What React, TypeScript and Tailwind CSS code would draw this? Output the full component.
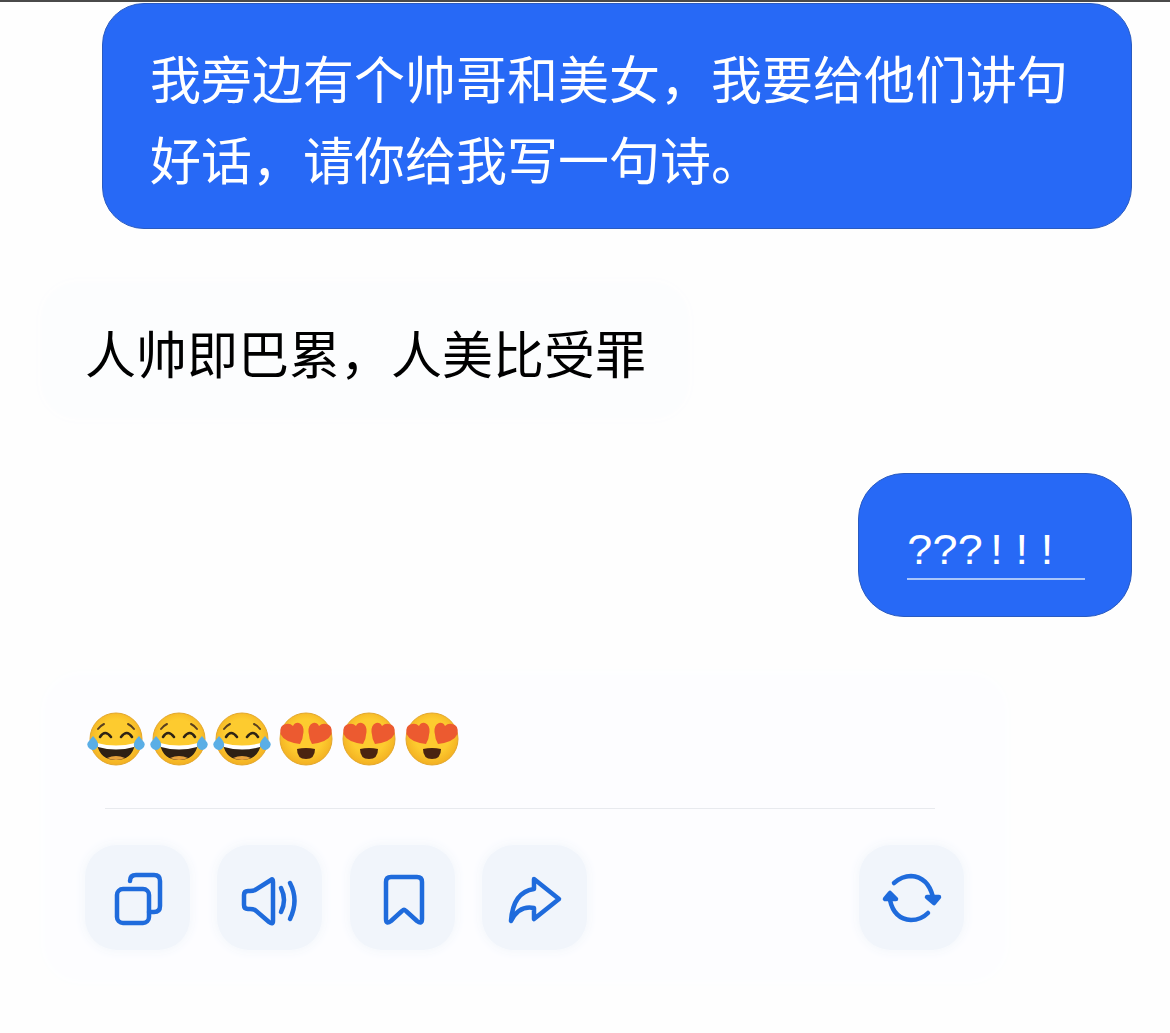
import React from 'react';

// 😂
const LaughEmoji = () => (
  <div className="w-[63.3px] flex justify-center shrink-0">
    <svg width="60" height="56" viewBox="0 0 60 56">
      <defs>
        <radialGradient id="faceA" cx="50%" cy="45%" r="55%">
          <stop offset="60%" stopColor="#fdcb2f" />
          <stop offset="100%" stopColor="#f3b022" />
        </radialGradient>
      </defs>
      <circle cx="30" cy="28" r="26" fill="url(#faceA)" stroke="#e3a72c" strokeWidth="1" />
      {/* 眉 */}
      <path d="M12 18 Q14 15 18 13" stroke="#5a4020" strokeWidth="2" fill="none" strokeLinecap="round" />
      <path d="M48 18 Q46 15 42 13" stroke="#5a4020" strokeWidth="2" fill="none" strokeLinecap="round" />
      {/* 目 */}
      <path d="M14 26 Q19 18 25 26" stroke="#2e2415" strokeWidth="2.6" fill="none" strokeLinecap="round" />
      <path d="M35 26 Q41 18 46 26" stroke="#2e2415" strokeWidth="2.6" fill="none" strokeLinecap="round" />
      {/* 口 */}
      <path d="M11 33 Q30 38 49 33 Q46 49 30 49 Q14 49 11 33 Z" fill="#2f2114" />
      <path d="M11 32 Q30 37 49 32 L48 36 Q30 41 12 36 Z" fill="#fff" />
      <path d="M21 47 Q30 43 39 47 Q30 51 21 47 Z" fill="#e8a23c" />
      {/* 涙 */}
      <path d="M7 25 Q13 31 12 35 Q9 41 4 38 Q-1 34 3 30 Z" fill="#5aaee6" />
      <path d="M53 25 Q47 31 48 35 Q51 41 56 38 Q61 34 57 30 Z" fill="#5aaee6" />
    </svg>
  </div>
);

// 😍
const HeartEmoji = () => (
  <div className="w-[63.3px] flex justify-center shrink-0">
    <svg width="56" height="56" viewBox="0 0 56 56">
      <defs>
        <radialGradient id="faceB" cx="50%" cy="45%" r="55%">
          <stop offset="60%" stopColor="#fdcb2f" />
          <stop offset="100%" stopColor="#f3b022" />
        </radialGradient>
      </defs>
      <circle cx="28" cy="28" r="26" fill="url(#faceB)" stroke="#e3a72c" strokeWidth="1" />
      <path d="M22 33 Q6 31 2.5 23 Q1 14 8 13 Q12 12 15 15 Q17 11 21 12 Q26 14 25.5 21 Q25 28 22 33 Z" fill="#ec5a30" />
      <path d="M34 33 Q50 31 53.5 23 Q55 14 48 13 Q44 12 41 15 Q39 11 35 12 Q30 14 30.5 21 Q31 28 34 33 Z" fill="#ec5a30" />
      <path d="M19 38 Q28 36 37 38 Q37 48 28 48 Q19 48 19 38 Z" fill="#4a2410" />
    </svg>
  </div>
);

const ActionButton = ({ children }: { children: React.ReactNode }) => (
  <button className="w-[105px] h-[105px] rounded-[32px] bg-[#f1f5fb] shadow-[0_0_10px_3px_#f5f8fc] flex items-center justify-center">
    <svg width="105" height="105" viewBox="0 0 105 105" fill="none" stroke="#1f6bdc" strokeWidth="4.5" strokeLinecap="round" strokeLinejoin="round">
      {children}
    </svg>
  </button>
);

const App: React.FC = () => {
  return (
    <div className="w-[1170px] h-[1033px] bg-[#fefefe] flex flex-col overflow-hidden font-['Noto_Sans_CJK_SC',sans-serif]">
      <div className="h-[2px] bg-[#4a4a4a] mb-[1px] shrink-0" />

      {/* 質問 */}
      <div className="ml-[102px] w-[1030px] h-[226px] bg-[#2769f6] rounded-[42px] border border-[#2a5bc0] pl-[47px] pr-[40px] pt-[33px] text-white text-[51px] leading-[81px] font-normal">
        我旁边有个帅哥和美女，我要给他们讲句好话，请你给我写一句诗。
      </div>

      {/* 回答 */}
      <div className="ml-[42px] mt-[54px] w-[646px] h-[135px] bg-[#fcfdfe] rounded-[36px] shadow-[0_0_10px_4px_#fdfdfe] pl-[43px] pt-[29px] text-black text-[51px] leading-[81px] whitespace-nowrap">
        人帅即巴累，人美比受罪
      </div>

      <div className="self-end mr-[38px] mt-[55px] w-[274px] h-[144px] bg-[#2769f6] rounded-[46px] border border-[#2a5bc0] pl-[48px] pt-[54px] text-white">
        <div className="font-['Liberation_Mono',monospace] text-[45px] leading-[50px] tracking-[-1.7px]">???!!!</div>
        <div className="w-[178px] h-[2px] bg-[#a9c6fb]" />
      </div>

      {/* カード */}
      <div className="ml-[45px] mt-[58px] w-[960px] h-[305px] bg-[#fdfdff] rounded-[36px] shadow-[0_0_10px_4px_#fdfeff] pl-[40px] pr-[41px] pt-[36px]">
        <div className="flex items-center -ml-[1px] h-[56px]">
          <LaughEmoji />
          <LaughEmoji />
          <LaughEmoji />
          <HeartEmoji />
          <HeartEmoji />
          <HeartEmoji />
        </div>
        <div className="ml-[20px] mr-[29px] mt-[41px] h-px bg-[#e8eaee]" />
        <div className="flex justify-between mt-[36px]">
          <div className="flex gap-[27.3px]">
            <ActionButton>
              <rect x="32" y="44" width="32" height="34" rx="6" />
              <path d="M45 36 Q45 30 51 30 H69 Q75 30 75 36 V61 Q75 67 69 67 H64" />
            </ActionButton>
            <ActionButton>
              <path d="M54 35 Q56 33 56 37 V76 Q56 80 52 77 L38 65 Q36 64 33 64 H31 Q27 64 27 60 V50 Q27 46 31 46 H33 Q36 46 38 45 Z" />
              <path d="M64 43 Q70 55 64 67" />
              <path d="M73 38 Q82 55 73 74" />
            </ActionButton>
            <ActionButton>
              <path d="M36 37 Q36 32 41 32 H67 Q72 32 72 37 V74 Q72 80 67 76 L56 66 Q54 64 52 66 L41 76 Q36 80 36 74 Z" />
            </ActionButton>
            <ActionButton>
              <path d="M52 34 L77 54 L52 74 V63 Q37 60 29 76 Q31 47 52 44 Z" />
            </ActionButton>
          </div>
          <ActionButton>
            <path d="M35 38 Q43 31 52 31 Q69 32 74 52" />
            <path d="M68 52 H80 L75 58 Z" fill="#1f6bdc" />
            <path d="M69 68 Q62 75 52 75 Q35 74 31 55" />
            <path d="M26 54 H37 L31 48 Z" fill="#1f6bdc" />
          </ActionButton>
        </div>
      </div>
    </div>
  );
};

export default App;
